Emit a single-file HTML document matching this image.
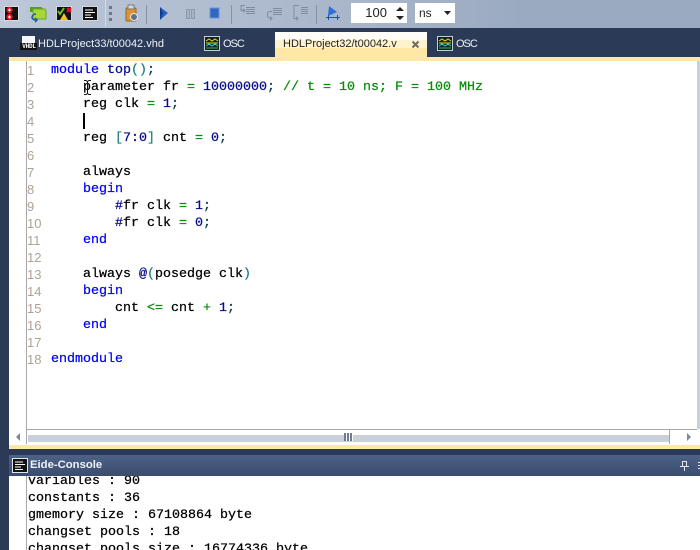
<!DOCTYPE html>
<html><head><meta charset="utf-8"><style>
html,body{margin:0;padding:0}
body{width:700px;height:550px;overflow:hidden;position:relative;background:#2b3a56;font-family:"Liberation Sans",sans-serif}
.a{position:absolute}
pre{margin:0;position:absolute;font:13.33px/17px "Liberation Mono",monospace;color:#000;white-space:pre;-webkit-text-stroke:.25px currentColor}
.k{color:#00f}.g{color:#0a8a0a}.n{color:#0a0a8c}.c{color:#098a09}.y{color:#1f7f7f}.s{color:#0a3f4a}
.tab{position:absolute;top:38px;font-size:11px;line-height:13px;color:#eef2f8;white-space:nowrap}
.osc{letter-spacing:-1px}
</style></head><body>
<div class="a" style="left:0;top:0;width:700px;height:28px;background:linear-gradient(90deg,#bcc7d8,#a9b6ca 50%,#9aaac0 75%)"></div>
<div class="a" style="left:105px;top:0;width:1px;height:27px;background:#d3dbe6"></div>
<div class="a" style="left:109px;top:6px;width:3px;height:3px;background:#6a778c"></div>
<div class="a" style="left:109px;top:12px;width:3px;height:3px;background:#6a778c"></div>
<div class="a" style="left:109px;top:18px;width:3px;height:3px;background:#6a778c"></div>
<svg class="a" style="left:0;top:0" width="480" height="28" viewBox="0 0 480 28">
<rect x="4.5" y="6.5" width="14" height="14" fill="#111" stroke="#d8dee8"/><circle cx="9.500" cy="10" r="3.200" fill="#e01020"/><circle cx="9.500" cy="17" r="3.200" fill="#e01020"/>
<path d="M8 10h3M9.500 8.500v3M8 17h3M9.500 15.500v3" stroke="#fff"/>
<path d="M30 7h11l3 2v3H30z" fill="#4fa01c"/><path d="M33 9h12l1 2v8H33z" fill="#a8d838" stroke="#6aa824"/><path d="M36 14a4 4 0 0 0-4 3c0 2 2 3 4 3M35 18l2 2-2 2" stroke="#1d55b0" stroke-width="1.500" fill="none"/>
<rect x="56.500" y="6.500" width="15" height="14" fill="#111" stroke="#cdd5e0"/><path d="M58 11l2 3 4-6" stroke="#70c020" stroke-width="2" fill="none"/><path d="M60 20l4-7 4 7z" fill="#f0c020"/><path d="M67 8l4 4M71 8l-4 4" stroke="#e01020" stroke-width="2"/>
<rect x="82.500" y="6.500" width="15" height="14" fill="#111" stroke="#cdd5e0"/><path d="M85 10h8M85 12.500h10M85 15h6M85 17.500h8" stroke="#fff"/>
<rect x="126" y="8" width="10" height="13" rx="1" fill="#e0932a" stroke="#8a6a30"/><rect x="128" y="5" width="6" height="4" fill="#d8dce0" stroke="#777"/><circle cx="134" cy="17" r="3.500" fill="#607088" stroke="#e8ecf0"/>
<path d="M146.500 5v19" stroke="#8492a8"/>
<path d="M160 7l8 6-8 7z" fill="#2560c0"/><path d="M160 7l3 6-3 7z" fill="#103a90"/>
<path d="M186.500 9.500h3v9h-3zM191.500 9.500h3v9h-3z" fill="#a8b4c4" stroke="#8c99ac"/>
<rect x="210" y="8" width="9" height="10" fill="#2f68c0" stroke="#6c94d8"/>
<path d="M231.500 5v19" stroke="#8492a8"/>
<g stroke="#7f8da2" fill="none"><path d="M246 7.500h9M246 9.500h9M246 11.500h9M246 13.500h9M245 5.500h-4v5h4M243 8.500l2 2-2 2"/><path d="M273 8.500h9M273 10.500h9M273 12.500h9M273 14.500h9M272 11.500h-3l-1.500 1.500v4l1.500 1h3M270 16.500l2 2-2 2"/><path d="M301 7.500h7M301 9.500h7M301 11.500h7M301 13.500h7M299 5.500h-5v13h4M296 16.500l2 2-2 2"/></g>
<path d="M316.500 5v19" stroke="#8492a8"/>
<path d="M329 6l8 6-9 4z" fill="#2a70d8"/><path d="M326 17.500h14M328.500 15v5M337.500 15v5" stroke="#1a50b0" fill="none"/>
</svg>
<div class="a" style="left:351px;top:3px;width:56px;height:20px;background:#fff;font-size:13px;line-height:20px;text-align:right;box-sizing:border-box;padding-right:20px;color:#222">100</div>
<svg class="a" style="left:393px;top:3px" width="14" height="20"><path d="M3 8l4-4 4 4zM3 13l4 4 4-4z" fill="#222"/></svg>
<div class="a" style="left:415px;top:3px;width:40px;height:20px;background:#fff;font-size:12px;line-height:20px;padding-left:4px;box-sizing:border-box;color:#222">ns</div>
<svg class="a" style="left:443px;top:9px" width="10" height="8"><path d="M1 2h7L4.500 6z" fill="#222"/></svg>

<svg class="a" style="left:20px;top:36px" width="18" height="15"><rect x="2" y="0" width="13" height="14" fill="#f4f6fa"/><rect x="0" y="7" width="17" height="7" fill="#111"/></svg>
<div class="a" style="left:21px;top:43px;width:16px;color:#fff;font:bold 6px/7px 'Liberation Mono',monospace;letter-spacing:-.2px;text-align:center">VHDL</div>
<div class="tab" style="left:38px">HDLProject33/t00042.vhd</div>
<svg class="a" style="left:204px;top:36px" width="16" height="15"><rect x=".5" y=".5" width="15" height="14" fill="#122" stroke="#c4ccd8"/><path d="M2 5l3-2 3 2 3-2 3 2M2 7h12" stroke="#e0e020" fill="none"/><path d="M2 10l3-2 3 2 3-2 3 2" stroke="#30d8d0" fill="none"/><path d="M2 12h12" stroke="#30c040"/></svg>
<div class="tab osc" style="left:223px">OSC</div>
<div class="a" style="left:275px;top:32px;width:152px;height:25px;background:#ffe8a6"></div>
<div class="a" style="left:275px;top:32px;width:152px;height:8px;background:#fffdf8"></div>
<div class="a" style="left:275px;top:40px;width:152px;height:8px;background:#fff3cf"></div>
<div class="tab" style="left:283px;color:#222">HDLProject32/t00042.v</div>
<svg class="a" style="left:411px;top:40px" width="10" height="10"><path d="M1.500 1.500l6 6M7.500 1.500l-6 6" stroke="#706a5c" stroke-width="2"/></svg>
<svg class="a" style="left:437px;top:36px" width="16" height="15"><rect x=".5" y=".5" width="15" height="14" fill="#122" stroke="#c4ccd8"/><path d="M2 5l3-2 3 2 3-2 3 2M2 7h12" stroke="#e0e020" fill="none"/><path d="M2 10l3-2 3 2 3-2 3 2" stroke="#30d8d0" fill="none"/><path d="M2 12h12" stroke="#30c040"/></svg>
<div class="tab osc" style="left:456px">OSC</div>

<div class="a" style="left:9px;top:57px;width:691px;height:4px;background:#ffe8a6"></div>
<div class="a" style="left:9px;top:61px;width:691px;height:373px;background:#fff"></div>
<div class="a" style="left:26px;top:61px;width:1px;height:368px;background:#a8a8a8"></div>
<div class="a" style="left:697px;top:61px;width:3px;height:368px;background:#c8d0dc"></div>
<pre style="left:27px;top:62px;font:13px/17px 'Liberation Sans',sans-serif;color:#ada295;-webkit-text-stroke:0">1
2
3
4
5
6
7
8
9
10
11
12
13
14
15
16
17
18</pre>
<pre style="left:51px;top:61.5px"><span class="k">module</span> <span class="n">top</span><span class="y">()</span><span class="s">;</span>
    parameter fr <span class="g">=</span> <span class="n">10000000</span><span class="s">;</span> <span class="c">// t = 10 ns; F = 100 MHz</span>
    reg clk <span class="g">=</span> <span class="n">1</span><span class="s">;</span>

    reg <span class="y">[</span><span class="n">7:0</span><span class="y">]</span> cnt <span class="g">=</span> <span class="n">0</span><span class="s">;</span>

    always
    <span class="k">begin</span>
        <span class="n">#</span>fr clk <span class="g">=</span> <span class="n">1</span><span class="s">;</span>
        <span class="n">#</span>fr clk <span class="g">=</span> <span class="n">0</span><span class="s">;</span>
    <span class="k">end</span>

    always <span class="n">@</span><span class="y">(</span>posedge clk<span class="y">)</span>
    <span class="k">begin</span>
        cnt <span class="g">&lt;=</span> cnt <span class="g">+</span> <span class="n">1</span><span class="s">;</span>
    <span class="k">end</span>

<span class="k">endmodule</span></pre>
<div class="a" style="left:83px;top:113px;width:2px;height:16px;background:#000"></div>
<svg class="a" style="left:83px;top:80px" width="10" height="16"><path d="M1 .5h2l1.500 1 1.500-1h2M4.500 1.500v12M1 14.500h2l1.500-1 1.500 1h2" stroke="#111" fill="none"/></svg>

<div class="a" style="left:27px;top:429px;width:670px;height:1px;background:#a8a8a8"></div>
<div class="a" style="left:9px;top:430px;width:691px;height:15px;background:#fff"></div>
<div class="a" style="left:26px;top:429px;width:1px;height:15px;background:#a8a8a8"></div>
<div class="a" style="left:669px;top:429px;width:1px;height:15px;background:#a8a8a8"></div>
<div class="a" style="left:28px;top:435px;width:641px;height:7px;background:#c8d0dc"></div>
<svg class="a" style="left:15px;top:432px" width="8" height="10"><path d="M5 1v8L1 5z" fill="#7d8898"/></svg>
<svg class="a" style="left:685px;top:432px" width="8" height="10"><path d="M2 1v8l4-4z" fill="#7d8898"/></svg>
<div class="a" style="left:344px;top:433px;width:9px;height:8px;background:repeating-linear-gradient(90deg,#707b90 0 2px,#fff 2px 3px)"></div>
<div class="a" style="left:9px;top:445px;width:691px;height:4px;background:#ffe8a6"></div>

<div class="a" style="left:9px;top:455px;width:691px;height:21px;background:linear-gradient(#4d6285,#3a4d70)"></div>
<svg class="a" style="left:12px;top:458px" width="16" height="16"><rect x=".5" y=".5" width="15" height="14" fill="#111" stroke="#dfe5ee"/><path d="M3 4h8M3 6.500h10M3 9h6M3 11.500h8" stroke="#fff"/></svg>
<div class="a" style="left:30px;top:458px;color:#eef2f8;font:bold 11.3px/15px 'Liberation Sans',sans-serif">Eide-Console</div>
<svg class="a" style="left:679px;top:460px" width="21" height="12"><path d="M3.500 1.500h4v5h-4zM1 6.500h9M5.500 7v4M19 2.500h2M19 5.500h2M19 8.500h2" stroke="#dfe5ee" fill="none"/></svg>
<div class="a" style="left:9px;top:476px;width:691px;height:74px;background:#fff;overflow:hidden"></div>
<div class="a" style="left:26px;top:476px;width:1px;height:74px;background:#a8a8a8"></div>
<div class="a" style="left:27px;top:476px;width:673px;height:74px;overflow:hidden">
<pre style="left:1px;top:-3.500px">variables : 90
constants : 36
gmemory size : 67108864 byte
changset pools : 18
changset pools size : 16774336 byte</pre>
</div>
<div class="a" style="left:0;top:28px;width:700px;height:4px;background:#2b3a56"></div>
</body></html>
